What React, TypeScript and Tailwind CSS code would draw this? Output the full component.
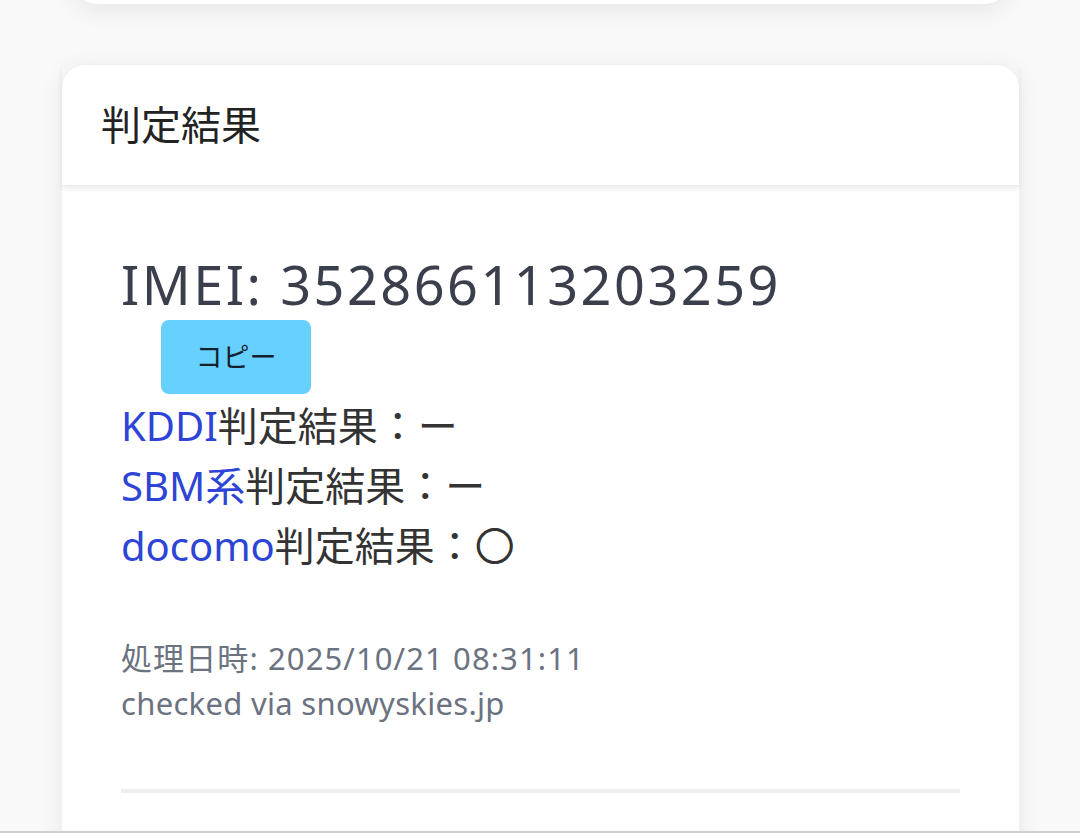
import React from "react";

export default function App() {
  const font = { fontFamily: '"Noto Sans", "Noto Sans CJK JP", sans-serif' };
  return (
    <div
      className="relative h-[833px] w-[1080px] overflow-hidden bg-[#f9f9f9]"
      style={font}
    >
      <div className="flex flex-col">
        <div className="ml-[73px] w-[936px] -mt-[60px] h-[64px] rounded-[24px] bg-white shadow-[0_6px_24px_rgba(0,0,0,0.08)]" />
        <div className="ml-[61px] w-[959px] mt-[60px] h-[900px] rounded-[24px] border border-[#f0f0f0] bg-white shadow-[0_4px_24px_rgba(0,0,0,0.07)]">
          <div className="flex h-[121px] items-center px-[39px] text-[40px] text-[#222222] shadow-[0_3px_5px_rgba(0,0,0,0.07)] border-b border-[#ececec]">
            判定結果
          </div>
          <div className="px-[59px] pt-[60px]">
            <div className="text-[54px] leading-[76px] tracking-[2.5px] text-[#3a3f4b]">
              IMEI: 352866113203259
            </div>
            <button className="ml-[40px] mt-[-2px] flex h-[74px] w-[150px] items-center justify-center rounded-[8px] bg-[#66d0ff] text-[27px] text-[#14202e]">
              コピー
            </button>
            <div className="mt-[2px] text-[40px] leading-[60px] text-[#333333]">
              <div>
                <span className="text-[#2d44d6]">KDDI</span>判定結果：ー
              </div>
              <div>
                <span className="text-[#2d44d6]">SBM系</span>判定結果：ー
              </div>
              <div>
                <span className="text-[#2d44d6]">docomo</span>判定結果：〇
              </div>
            </div>
            <div className="mt-[60px] text-[31px] leading-[45px] text-[#6b7280]">
              <div className="tracking-[1.1px]">処理日時: 2025/10/21 08:31:11</div>
              <div className="tracking-[0.3px]">checked via snowyskies.jp</div>
            </div>
            <div className="mt-[63px] h-[4px] bg-[#efefef]" />
          </div>
        </div>
      </div>
      <div className="absolute bottom-0 left-0 h-[2px] w-full bg-[#cfcfcf]" />
    </div>
  );
}
